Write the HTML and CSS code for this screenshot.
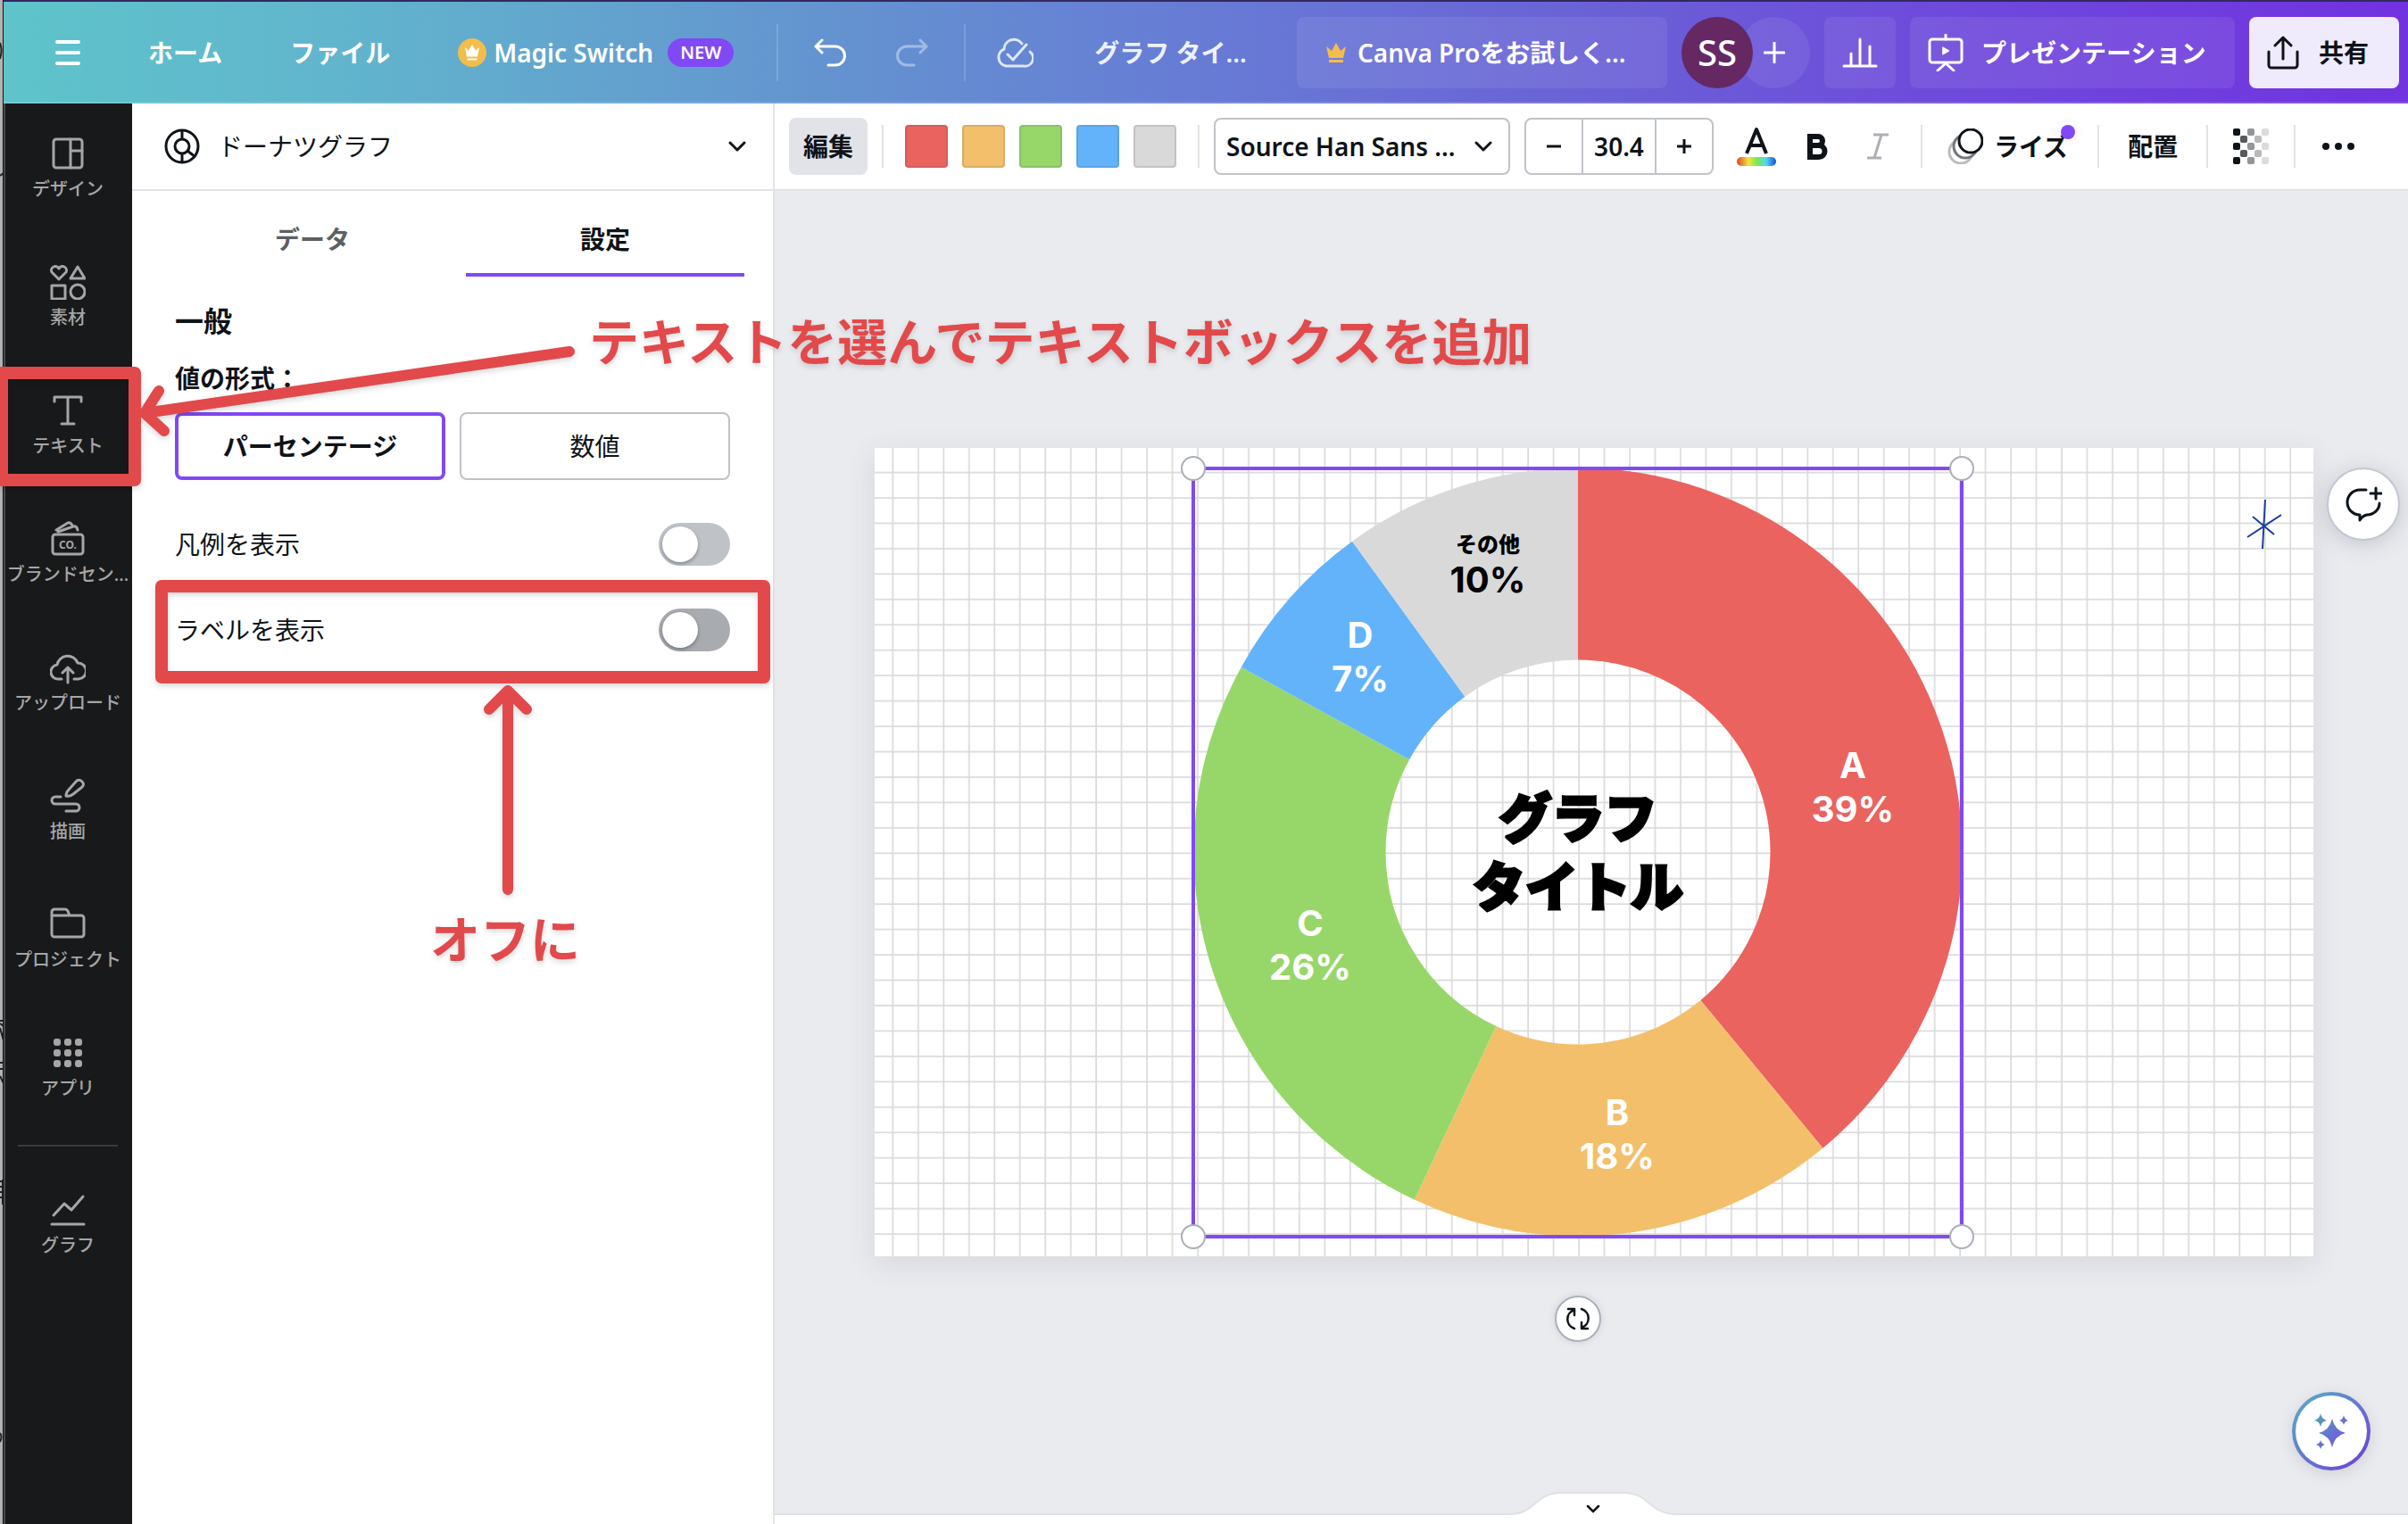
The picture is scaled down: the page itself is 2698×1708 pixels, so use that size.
FILE: index.html
```html
<!DOCTYPE html>
<html lang="ja">
<head>
<meta charset="utf-8">
<title>グラフ タイトル</title>
<link rel="stylesheet" href="styles.css">
</head>
<body>
<div class="edge" aria-hidden="true">
  <svg width="4" height="1708" viewBox="0 0 4 1708" fill="none" stroke="#222" stroke-width="2"><path d="M0 48q3 8 0 18M0 197l4-3M0 1144h4M0 1147l4 3M0 1152l4 14M0 1191h4M0 1198h4M0 1206l4 8M0 1324h4M0 1330h4M0 1336h4M0 1342h4M3 1322v28M0 1606q3 4 0 10"/></svg>
</div>
<div class="app">
  <header class="topbar">
    <nav class="menu">
      <button class="plain" aria-label="メニュー"><svg width="28" height="28" viewBox="0 0 28 28" stroke="#fff" stroke-width="4" stroke-linecap="round"><path d="M2 2h24M2 14h24M2 26h24"/></svg></button>
      <a href="#">ホーム</a>
      <a href="#">ファイル</a>
      <a href="#" class="magic">
        <svg width="32" height="32" viewBox="0 0 32 32"><circle cx="16" cy="16" r="16" fill="#f3bd4c"/><path d="M8 10l4 3.500 4-6.500 4 6.500 4-3.500-2 10.500H10z" fill="#fff"/><path d="M10.500 23.500h11" stroke="#fff" stroke-width="2"/></svg>
        <span>Magic Switch</span><span class="pill">NEW</span>
      </a>
    </nav>
    <span class="vline"></span>
    <div class="history">
      <button class="plain" aria-label="元に戻す"><svg width="36" height="32" viewBox="0 0 36 32" fill="none" stroke="#fff" stroke-width="3" stroke-linecap="round" stroke-linejoin="round"><path d="M9 2L2 9l7 7M2 9h22a10 10 0 0 1 0 21h-8"/></svg></button>
      <button class="plain faded" aria-label="やり直す"><svg width="36" height="32" viewBox="0 0 36 32" fill="none" stroke="#fff" stroke-width="3" stroke-linecap="round" stroke-linejoin="round"><path d="M27 2l7 7-7 7M34 9H12a10 10 0 0 0 0 21h8"/></svg></button>
    </div>
    <span class="vline"></span>
    <button class="plain cloud" aria-label="保存済み"><svg width="42" height="34" viewBox="0 0 42 34" fill="none" stroke="#dfe6f8" stroke-width="3" stroke-linecap="round" stroke-linejoin="round"><path d="M29 7A11 11 0 0 0 9 13 10 10 0 0 0 11 32h20a9 9 0 0 0 7-16M13 19l6 6L34 8"/></svg></button>
    <button class="plain doc">グラフ タイ...</button>
    <div class="actions">
      <button class="glass pro"><svg width="24" height="24" viewBox="0 0 24 24" fill="#f3bd4c"><path d="M1 5l6 5 5-9 5 9 6-5-3 13H4z"/><path d="M4 20h16v3H4z"/></svg>Canva Proをお試しく...</button>
      <div class="people"><span class="avatar">SS</span><button class="glass add" aria-label="追加"><svg width="24" height="24" viewBox="0 0 24 24" stroke="#fff" stroke-width="3" stroke-linecap="round"><path d="M12 1v22M1 12h22"/></svg></button></div>
      <button class="glass square" aria-label="分析"><svg width="40" height="34" viewBox="0 0 40 34" stroke="#fff" stroke-width="3" stroke-linecap="round"><path d="M2 32h36M10 32V18M20 32V2M31 32V10"/></svg></button>
      <button class="glass present"><svg width="40" height="42" viewBox="0 0 40 42" fill="none" stroke="#fff" stroke-width="3" stroke-linecap="round" stroke-linejoin="round"><rect x="2" y="6" width="36" height="26" rx="3"/><path d="M20 1v5M11 41l9-8 9 8"/><path d="M17 15l7 4-7 4z" fill="#fff" stroke-width="1"/></svg>プレゼンテーション</button>
      <button class="share"><svg width="36" height="38" viewBox="0 0 36 38" fill="none" stroke="#0e1318" stroke-width="3" stroke-linecap="round" stroke-linejoin="round"><path d="M2 18v15a3 3 0 0 0 3 3h26a3 3 0 0 0 3-3V18M18 26V2M9 11l9-9 9 9"/></svg>共有</button>
    </div>
  </header>
  <div class="body">
    <aside class="rail">
      <button><svg viewBox="0 0 40 40"><rect x="4" y="4" width="32" height="32" rx="3"/><path d="M23 4v32M23 17h13"/></svg>デザイン</button>
      <button><svg viewBox="0 0 40 40"><path d="M10 17L2 9a4 4 0 0 1 8-4 4 4 0 0 1 8 4zM31 3l8 13H23zM2 24h15v15H2z"/><circle cx="31" cy="31" r="8"/></svg>素材</button>
      <button><svg viewBox="0 0 40 40"><path d="M5 10V5h30v5M20 5v30M13 35h14"/></svg>テキスト</button>
      <button><svg viewBox="0 0 40 40"><rect x="3" y="15" width="34" height="22" rx="3"/><path d="M7 10l13-8q3-1 5 3M9 12l17-6q4-1 5 4"/><text x="20" y="31">CO.</text></svg>ブランドセン...</button>
      <button><svg viewBox="0 0 40 40"><path d="M13 33h-3A8 8 0 0 1 8 17 12 12 0 0 1 31 15a9 9 0 0 1 1 18h-5M20 37V21M14 26l6-6 6 6"/></svg>アップロード</button>
      <button><svg viewBox="0 0 40 40"><path d="M12 21H6a4 4 0 0 0 0 8h23a4 4 0 0 1 0 8H18M18 20q0-4 3-7L30 3q3-2 6 1t0 6L26 18q-4 3-8 2z"/></svg>描画</button>
      <button><svg viewBox="0 0 40 40"><path d="M2 12V6a3 3 0 0 1 3-3h12q2 0 3 2l2 5M2 10h33a3 3 0 0 1 3 3v18a3 3 0 0 1-3 3H5a3 3 0 0 1-3-3z"/></svg>プロジェクト</button>
      <button><svg viewBox="0 0 40 40" class="solid"><rect x="4" y="4" width="8" height="8" rx="3"/><rect x="16" y="4" width="8" height="8" rx="3"/><rect x="28" y="4" width="8" height="8" rx="3"/><rect x="4" y="16" width="8" height="8" rx="3"/><rect x="16" y="16" width="8" height="8" rx="3"/><rect x="28" y="16" width="8" height="8" rx="3"/><rect x="4" y="28" width="8" height="8" rx="3"/><rect x="16" y="28" width="8" height="8" rx="3"/><rect x="28" y="28" width="8" height="8" rx="3"/></svg>アプリ</button>
      <hr>
      <button><svg viewBox="0 0 40 40"><path d="M4 26l12-13 8 7L37 5M2 36h36"/></svg>グラフ</button>
    </aside>
    <section class="panel">
      <button class="kind"><svg width="40" height="40" viewBox="0 0 40 40" fill="none" stroke="#0e1318" stroke-width="3"><circle cx="20" cy="20" r="18"/><circle cx="20" cy="20" r="8"/><path d="M20 2v10M20 28v10M26 25l9 7"/></svg><span>ドーナツグラフ</span><svg width="20" height="12" viewBox="0 0 20 12" fill="none" stroke="#0e1318" stroke-width="3" stroke-linecap="round" stroke-linejoin="round"><path d="M2 2l8 8 8-8"/></svg></button>
      <div class="tabs" role="tablist">
        <button role="tab" aria-selected="false">データ</button>
        <button role="tab" aria-selected="true">設定</button>
      </div>
      <div class="settings">
        <h2>一般</h2>
        <h3>値の形式：</h3>
        <div class="choices">
          <button aria-pressed="true">パーセンテージ</button>
          <button aria-pressed="false">数値</button>
        </div>
        <label class="row">凡例を表示<input type="checkbox"></label>
        <label class="row">ラベルを表示<input type="checkbox" class="hot"></label>
      </div>
    </section>
    <main class="main">
      <div class="toolbar">
        <button class="edit">編集</button>
        <span class="sep"></span>
        <div class="swatches">
          <button class="c-red" aria-label="赤"></button>
          <button class="c-orange" aria-label="オレンジ"></button>
          <button class="c-green" aria-label="緑"></button>
          <button class="c-blue" aria-label="青"></button>
          <button class="c-gray" aria-label="グレー"></button>
        </div>
        <span class="sep"></span>
        <div class="font"><select aria-label="フォント"><option>Source Han Sans ...</option></select><svg width="20" height="12" viewBox="0 0 20 12" fill="none" stroke="#0e1318" stroke-width="3" stroke-linecap="round" stroke-linejoin="round"><path d="M2 2l8 8 8-8"/></svg></div>
        <div class="stepper">
          <button aria-label="小さく"><svg width="16" height="16" viewBox="0 0 16 16" stroke="#0e1318" stroke-width="3"><path d="M0 8h16"/></svg></button>
          <input type="text" value="30.4" aria-label="フォントサイズ">
          <button aria-label="大きく"><svg width="16" height="16" viewBox="0 0 16 16" stroke="#0e1318" stroke-width="3"><path d="M0 8h16M8 0v16"/></svg></button>
        </div>
        <div class="styles">
          <button aria-label="文字の色"><svg width="48" height="48" viewBox="0 0 48 48"><defs><linearGradient id="rainbow"><stop offset="0" stop-color="#e0452b"/><stop offset=".3" stop-color="#f4e33d"/><stop offset=".5" stop-color="#7fe84e"/><stop offset=".75" stop-color="#4fd7ef"/><stop offset="1" stop-color="#1c4bdc"/></linearGradient></defs><path d="M13 32L24 5l11 27M16 23h16" fill="none" stroke="#0e1318" stroke-width="4" stroke-linejoin="round"/><rect x="2" y="36" width="44" height="10" rx="5" fill="url(#rainbow)"/></svg></button>
          <button aria-label="太字"><svg width="48" height="48" viewBox="0 0 48 48" fill="none" stroke="#0e1318" stroke-width="6"><path d="M16 13h9a5 5 0 0 1 0 10h-9zM16 23h10a6 6 0 0 1 0 13H16z"/></svg></button>
          <button aria-label="斜体"><svg width="48" height="48" viewBox="0 0 48 48" fill="none" stroke="#acafb3" stroke-width="3"><path d="M19 11h17M12 37h16M28 11l-8 26"/></svg></button>
        </div>
        <span class="sep"></span>
        <button class="animate"><svg width="40" height="40" viewBox="0 0 40 40" fill="#fff" stroke-width="3"><circle cx="15" cy="26" r="13" stroke="#bbbcbe"/><circle cx="20" cy="20" r="13" stroke="#737579"/><circle cx="26" cy="14" r="13" stroke="#0e1318"/></svg>ライズ<i></i></button>
        <span class="sep"></span>
        <button class="place">配置</button>
        <span class="sep"></span>
        <button class="alpha" aria-label="透明度"><svg width="40" height="40" viewBox="0 0 40 40"><g fill="#0e1318"><rect width="8" height="8" rx="2"/><rect y="16" width="8" height="8" rx="2"/><rect y="32" width="8" height="8" rx="2"/></g><g fill="#56595d"><rect x="8" y="8" width="8" height="8" rx="2"/><rect x="8" y="24" width="8" height="8" rx="2"/></g><g fill="#939598"><rect x="16" width="8" height="8" rx="2"/><rect x="16" y="16" width="8" height="8" rx="2"/><rect x="16" y="32" width="8" height="8" rx="2"/></g><g fill="#b7b9bb"><rect x="24" y="8" width="8" height="8" rx="2"/><rect x="24" y="24" width="8" height="8" rx="2"/></g><g fill="#dbdcdd"><rect x="32" width="8" height="8" rx="2"/><rect x="32" y="16" width="8" height="8" rx="2"/><rect x="32" y="32" width="8" height="8" rx="2"/></g></svg></button>
        <span class="sep"></span>
        <button class="more" aria-label="その他"><svg width="36" height="8" viewBox="0 0 36 8" fill="#0e1318"><circle cx="4" cy="4" r="4"/><circle cx="18" cy="4" r="4"/><circle cx="32" cy="4" r="4"/></svg></button>
      </div>
      <div class="workspace">
        <div class="page">
          <svg class="art" viewBox="0 0 1612 906">
            <defs><pattern id="grid" x="-7.200" y="0" width="28.470" height="28.450" patternUnits="userSpaceOnUse"><path d="M0 28.450h28.470M28.470 0v28.450" stroke="#dadada" stroke-width="3.400"/></pattern></defs>
            <rect width="1612" height="906" fill="#fff"/>
            <rect width="1612" height="906" fill="url(#grid)"/>
            <g class="ring" transform="translate(788 453) rotate(-90)">
              <circle r="323" pathLength="100" stroke="#ea635f" stroke-dasharray="39 61"/>
              <circle r="323" pathLength="100" stroke="#f3bf6b" stroke-dasharray="18 82" stroke-dashoffset="-39"/>
              <circle r="323" pathLength="100" stroke="#97d769" stroke-dasharray="26 74" stroke-dashoffset="-57"/>
              <circle r="323" pathLength="100" stroke="#63b3fa" stroke-dasharray="7 93" stroke-dashoffset="-83"/>
              <circle r="323" pathLength="100" stroke="#d9d9d9" stroke-dasharray="10 90" stroke-dashoffset="-90"/>
            </g>
            <g class="labels">
              <text x="1096" y="370">A</text><text x="1096" y="419">39%</text>
              <text x="832" y="759">B</text><text x="832" y="808">18%</text>
              <text x="488" y="547">C</text><text x="488" y="596">26%</text>
              <text x="544" y="224">D</text><text x="544" y="273">7%</text>
              <g class="dark"><text x="687" y="117" class="small">その他</text><text x="687" y="162">10%</text></g>
            </g>
            <g class="title"><text x="788" y="437">グラフ</text><text x="788" y="514">タイトル</text></g>
            <path d="M1558 58l-3 55M1576 75l-38 25M1544 77l24 20" stroke="#1c3fa0" stroke-width="2" fill="none"/>
            <rect x="357" y="23" width="861" height="861" fill="none" stroke="#8049f5" stroke-width="4"/>
            <g class="handles"><circle cx="357" cy="23" r="13"/><circle cx="1218" cy="23" r="13"/><circle cx="357" cy="884" r="13"/><circle cx="1218" cy="884" r="13"/></g>
          </svg>
          <button class="rotate" aria-label="回転"><svg width="28" height="28" viewBox="0 0 28 28" fill="none" stroke="#0e1318" stroke-width="2.500" stroke-linecap="round" stroke-linejoin="round"><path d="M3 3h7v7M10 4A11 11 0 0 0 10 25M25 25h-7v-7M18 24A11 11 0 0 0 18 3"/></svg></button>
        </div>
        <button class="comment" aria-label="コメント"><svg width="42" height="42" viewBox="0 0 42 42" fill="none" stroke="#0e1318" stroke-width="3" stroke-linecap="round" stroke-linejoin="round"><path d="M24 5H17A14 14 0 0 0 17 33v6q3-5 8-6A14 13 0 0 0 39 20M35 3v12M29 9h12"/></svg></button>
        <button class="assist" aria-label="マジック"><svg width="42" height="42" viewBox="0 0 42 42"><defs><linearGradient id="spark" x1="0" y1="0" x2="42" y2="42" gradientUnits="userSpaceOnUse"><stop offset=".1" stop-color="#4fa3b0"/><stop offset=".45" stop-color="#6279cf"/><stop offset="1" stop-color="#7a4be6"/></linearGradient></defs><path fill="url(#spark)" d="M22 7q3 13 15 16-12 3-15 16-3-13-15-16 12-3 15-16zM9 1q1 6 7 8-6 1-7 7-1-6-7-7 6-2 7-8zM35 3q1 5 5 6-4 1-5 5-1-4-5-5 4-1 5-6zM9 31q1 4 5 5-4 1-5 5-1-4-5-5 4-1 5-5z"/></svg></button>
        <button class="drawer" aria-label="ページを表示"><svg width="188" height="36" viewBox="0 0 188 36"><path d="M0 25C30 25 28 1 58 1h70c30 0 28 24 60 24v11H0z" fill="#fff"/><path d="M0 25C30 25 28 1 58 1h70c30 0 28 24 60 24" fill="none" stroke="#dfe1e6" stroke-width="2"/><path d="M88 16l6 6 6-6" fill="none" stroke="#0e1318" stroke-width="2.500" stroke-linecap="round"/></svg></button>
        <div class="tray"></div>
      </div>
    </main>
  </div>
</div>
<svg class="notes" width="1760" height="1120" viewBox="0 0 1760 1120">
  <g fill="none" stroke="#e2494b" stroke-width="14" stroke-linejoin="round">
    <rect x="2" y="418" width="149" height="120"/>
    <rect x="181" y="657" width="675" height="102"/>
  </g>
  <g fill="none" stroke="#e2494b" stroke-width="12" stroke-linecap="round" stroke-linejoin="round">
    <path d="M638 394L162 463M178 438l-16 25 22 20"/>
    <path d="M569 997V774M548 795l21-21 21 21"/>
  </g>
  <text x="660" y="404">テキストを選んでテキストボックスを追加</text>
  <text x="482" y="1074">オフに</text>
</svg>
</body>
</html>
```
FILE: styles.css
```css
* { box-sizing: border-box; }

body {
  margin: 0;
  display: flex;
  position: relative;
  min-height: 100vh;
  overflow: hidden;
  background: #fff;
  color: #0e1318;
  font: 400 28px/40px "Noto Sans", "Noto Sans CJK JP", sans-serif;
}

button, input, select {
  font: inherit;
  color: inherit;
  background: none;
  border: 0;
  padding: 0;
  margin: 0;
}

svg { display: block; flex: none; }

.edge {
  flex: none;
  width: 4px;
  height: 100vh;
  overflow: hidden;
  background: #b3b3b3;
  border-right: 1px solid #111;
}

.app {
  flex: 1;
  min-width: 0;
  display: flex;
  flex-direction: column;
}

/* top bar */
.topbar {
  display: flex;
  align-items: center;
  height: 116px;
  padding: 0 10px 0 58px;
  border-top: 2px solid #33285f;
  box-shadow: inset 0 -2px rgba(255, 255, 255, .15);
  background: linear-gradient(90deg, #5ec4ca, #61b5cd 14%, #6492d0 35%, #677bd5 50%, #6a61d6 66%, #6e4bdb 80%, #7132e0);
  color: #fff;
  font-weight: 600;
  white-space: nowrap;
}
.menu { display: flex; align-items: center; gap: 76px; }
.menu a { color: inherit; text-decoration: none; }
.magic { display: flex; align-items: center; gap: 8px; }
.pill {
  margin-left: 8px;
  width: 74px;
  border-radius: 16px;
  background: #8049f5;
  font-size: 20px;
  line-height: 32px;
  text-align: center;
}
.vline { width: 2px; height: 64px; background: rgba(255, 255, 255, .15); }
.menu + .vline { margin-left: 48px; }
.history { display: flex; gap: 56px; margin: 0 40px; }
.faded { opacity: .4; }
.cloud { margin: 0 68px 0 34px; }
.doc { color: #eef1fb; }
.actions { display: flex; gap: 16px; margin-left: auto; }
.actions > button { height: 80px; border-radius: 8px; display: flex; align-items: center; padding-left: 20px; }
.glass { background: rgba(255, 255, 255, .08); }
.actions .pro { width: 415px; gap: 12px; padding-left: 32px; }
.people { display: flex; }
.avatar {
  width: 80px;
  height: 80px;
  border-radius: 50%;
  background: #652863;
  font-size: 40px;
  font-weight: 500;
  line-height: 80px;
  text-align: center;
  z-index: 1;
}
.add { width: 80px; height: 80px; margin-left: -16px; border-radius: 50%; display: grid; place-items: center; }
.square { width: 80px; }
.present { width: 364px; gap: 20px; }
.share { width: 168px; gap: 22px; background: #f0ebfc; color: #0e1318; }

.body { flex: 1; display: flex; }

/* tool rail */
.rail {
  flex: none;
  width: 144px;
  box-shadow: inset 2px 0 #46484a;
  background: #18191b;
  color: #a6a6a6;
  font-size: 20px;
  font-weight: 500;
  line-height: 24px;
}
.rail button {
  display: flex;
  flex-direction: column;
  align-items: center;
  gap: 8px;
  width: 100%;
  height: 144px;
  padding-top: 36px;
  white-space: nowrap;
}
.rail svg { width: 40px; height: 40px; fill: none; stroke: #a6a6a6; stroke-width: 3; stroke-linecap: round; stroke-linejoin: round; }
.rail .solid { fill: #a6a6a6; stroke: none; }
.rail text { fill: #a6a6a6; stroke: none; font-size: 12px; font-weight: 700; text-anchor: middle; }
.rail hr { margin: 15px 16px; border: 0; border-top: 2px solid #3a3b3d; }

/* settings panel */
.panel { flex: none; width: 720px; border-right: 2px solid #e2e3e8; background: #fff; }
.kind {
  display: flex;
  align-items: center;
  gap: 20px;
  width: 100%;
  height: 98px;
  padding: 0 30px 0 36px;
  border-bottom: 2px solid #e2e3e8;
}
.kind span { flex: 1; text-align: left; }
.tabs { display: flex; gap: 16px; padding: 0 32px 0 46px; }
.tabs button { flex: 1; height: 96px; padding-top: 16px; border-bottom: 4px solid transparent; font-weight: 600; color: #5c5f63; }
.tabs [aria-selected="true"] { border-color: #8049f5; color: #0e1318; }
.settings { padding: 26px 48px; }
h2 { margin: 0; font-size: 32px; line-height: 48px; font-weight: 600; }
h3 { margin: 20px 0 18px; font-size: 28px; line-height: 40px; font-weight: 600; }
.choices { display: flex; gap: 16px; }
.choices button { flex: 1 1 50%; height: 76px; border: 2px solid #bfc3c8; border-radius: 8px; }
.choices [aria-pressed="true"] { border: 4px solid #8049f5; font-weight: 600; }
.row { display: flex; align-items: center; justify-content: space-between; height: 48px; margin-top: 48px; }
.row input { appearance: none; width: 80px; height: 48px; padding: 4px; border-radius: 24px; background: #bfc3c8; }
.row input::before { content: ""; display: block; width: 40px; height: 40px; border-radius: 50%; background: #fff; box-shadow: 0 2px 4px rgba(30, 40, 60, .4); }
.row .hot { background: #a8abb0; }

/* editor toolbar */
.main { flex: 1; min-width: 0; display: flex; flex-direction: column; }
.toolbar {
  display: flex;
  align-items: center;
  height: 98px;
  padding-left: 16px;
  border-bottom: 2px solid #e2e3e8;
  font-weight: 600;
  white-space: nowrap;
}
.toolbar > * { flex: none; }
.sep { width: 2px; height: 48px; background: #e2e3e8; }
.edit { width: 88px; height: 64px; margin-right: 16px; border-radius: 8px; background: #e2e3e8; }
.swatches { display: flex; gap: 16px; margin: 0 24px; }
.swatches button { width: 48px; height: 48px; border: 2px solid rgba(57, 76, 96, .15); border-radius: 4px; }
.swatches .c-red { background: #ea635f; }
.swatches .c-orange { background: #f3bf6b; }
.swatches .c-green { background: #97d769; }
.swatches .c-blue { background: #63b3fa; }
.swatches .c-gray { background: #d9d9d9; }
.font { display: grid; align-items: center; width: 332px; margin: 0 16px; }
.font > * { grid-area: 1 / 1; }
.font select { appearance: none; height: 64px; padding: 0 12px; border: 2px solid #bfc3c8; border-radius: 8px; }
.font svg { justify-self: end; margin-right: 20px; pointer-events: none; }
.stepper { display: flex; width: 212px; height: 64px; border: 2px solid #bfc3c8; border-radius: 8px; }
.stepper button { flex: 1; display: grid; place-items: center; }
.stepper input { width: 84px; border: solid #bfc3c8; border-width: 0 2px; text-align: center; }
.styles { display: flex; gap: 20px; margin: 0 24px; }
.animate { position: relative; display: flex; align-items: center; gap: 12px; margin: 0 33px 0 28px; }
.animate i { position: absolute; top: -4px; right: -8px; width: 16px; height: 16px; border-radius: 50%; background: #8049f5; box-shadow: 0 0 0 8px rgba(128, 73, 245, .02); }
.place { margin: 0 32px; }
.alpha { margin: 0 28px; }
.more { margin-left: 30px; }

/* canvas */
.workspace {
  flex: 1;
  position: relative;
  padding: 288px 106px 300px 112px;
  background: #eaebef;
}
.page { position: relative; box-shadow: 0 8px 30px rgba(64, 70, 95, .12); }
.art { width: 100%; height: auto; }
.ring { fill: none; stroke-width: 215; }
.labels, .title { font-weight: 700; text-anchor: middle; }
.labels { font-family: "Inter", "Noto Sans CJK JP", sans-serif; font-size: 40px; fill: #fff; }
.dark { fill: #000; }
.small { font-size: 24px; font-weight: 900; }
.title { font-family: "Noto Sans CJK JP", sans-serif; font-size: 59px; font-weight: 900; fill: #000; stroke: #000; stroke-width: 3; stroke-miterlimit: 2; }
.handles { fill: #fff; stroke: #aab0b8; stroke-width: 2; }
.rotate, .comment, .assist { position: absolute; display: grid; place-items: center; border-radius: 50%; background: #fff; }
.rotate { left: 762px; top: 950px; width: 52px; height: 52px; border: 2px solid #aab0b8; box-shadow: 0 0 8px rgba(64, 70, 95, .15); }
.comment { top: 310px; right: 9px; width: 82px; height: 82px; border: 2px solid #c3c7d2; box-shadow: 0 4px 24px rgba(64, 70, 95, .22); }
.assist {
  right: 42px;
  bottom: 60px;
  width: 88px;
  height: 88px;
  border: 4px solid transparent;
  background: linear-gradient(#fff, #fff) padding-box, linear-gradient(135deg, #58b0c4, #6279cf 50%, #6f3bd2) border-box;
  box-shadow: 0 4px 16px rgba(64, 70, 95, .15);
}
.tray { position: absolute; left: 0; right: 0; bottom: 0; height: 12px; border-top: 2px solid #dfe1e6; background: #fff; }
.drawer { position: absolute; z-index: 1; left: 50%; bottom: 0; margin-left: -92px; }

/* hand-drawn notes over the editor */
.notes { position: absolute; left: 0; top: 0; z-index: 5; pointer-events: none; filter: drop-shadow(0 3px 3px rgba(0, 0, 0, .15)); }
.notes text { font: 700 56px "Noto Sans CJK JP", sans-serif; fill: #e2494b; }
```
